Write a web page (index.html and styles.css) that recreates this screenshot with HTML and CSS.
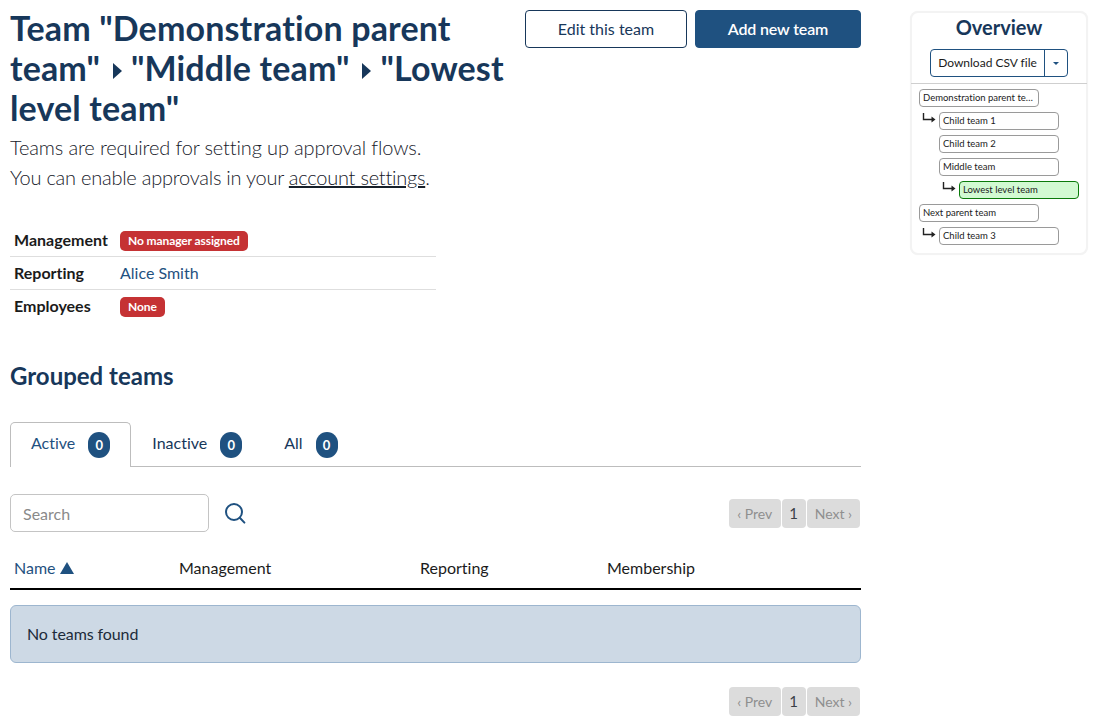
FILE: index.html
```html
<!DOCTYPE html>
<html>

<head>
    <meta charset="utf-8">
    <meta name="viewport" content="width=device-width, initial-scale=1.0">
    <title>Team overview</title>
    <link rel="stylesheet" href="styles.css">
</head>

<body>
    <div class="page">
        <div class="main">
            <div class="head">
                <div class="head-text">
                    <h1>Team "Demonstration parent team" <span class="crumb"></span> "Middle team" <span class="crumb"></span> "Lowest level team"</h1>
                    <p class="lead">Teams are required for setting up approval flows.</p>
                    <p class="lead lead-tight">You can enable approvals in your <a href="#">account settings</a>.</p>
                </div>
                <div class="head-actions">
                    <a class="btn btn-edit" href="#">Edit this team</a>
                    <a class="btn btn-add" href="#">Add new team</a>
                </div>
            </div>

            <div class="info">
                <div class="info-row">
                    <div class="info-label">Management</div>
                    <div><span class="badge-red">No manager assigned</span></div>
                </div>
                <div class="info-row">
                    <div class="info-label">Reporting</div>
                    <div class="info-value"><a class="info-link" href="#">Alice Smith</a></div>
                </div>
                <div class="info-row">
                    <div class="info-label">Employees</div>
                    <div><span class="badge-red">None</span></div>
                </div>
            </div>

            <h2>Grouped teams</h2>

            <div class="tabs">
                <a class="tab tab-active" href="#"><span class="tab-text">Active</span> <span class="count">0</span></a>
                <a class="tab" href="#"><span class="tab-text">Inactive</span> <span class="count">0</span></a>
                <a class="tab" href="#"><span class="tab-text">All</span> <span class="count">0</span></a>
            </div>

            <div class="toolbar">
                <input class="search" type="text" placeholder="Search">
                <svg class="search-icon" width="22" height="22" viewBox="0 0 22 22" fill="none" stroke="#1f5180" stroke-width="2">
                    <circle cx="10" cy="10" r="8"></circle>
                    <path d="M15.8 15.8l4.6 4.8" stroke-linecap="round"></path>
                </svg>
                <div class="pager">
                    <span class="pg pg-off">‹ Prev</span>
                    <span class="pg pg-num">1</span>
                    <span class="pg pg-off">Next ›</span>
                </div>
            </div>

            <div class="thead">
                <div class="th-name">Name <span class="sort"></span></div>
                <div>Management</div>
                <div>Reporting</div>
                <div>Membership</div>
            </div>

            <div class="alert">No teams found</div>

            <div class="pager pager-bottom">
                <span class="pg pg-off">‹ Prev</span>
                <span class="pg pg-num">1</span>
                <span class="pg pg-off">Next ›</span>
            </div>
        </div>

        <div class="side">
            <div class="side-title">Overview</div>
            <div class="split">
                <span class="split-main">Download CSV file</span>
                <span class="split-caret"><i></i></span>
            </div>
            <div class="tree">
                <div class="node">Demonstration parent team</div>
                <div class="node-row lvl1">
                    <svg class="elbow" width="14" height="12" viewBox="0 0 14 12"><path d="M1.5 1v6.5h9" fill="none" stroke="#222" stroke-width="1.4"></path><path d="M9.5 4.5l4 3-4 3z" fill="#222"></path></svg>
                    <div class="node">Child team 1</div>
                </div>
                <div class="node lvl1">Child team 2</div>
                <div class="node lvl1">Middle team</div>
                <div class="node-row lvl2">
                    <svg class="elbow" width="14" height="12" viewBox="0 0 14 12"><path d="M1.5 1v6.5h9" fill="none" stroke="#222" stroke-width="1.4"></path><path d="M9.5 4.5l4 3-4 3z" fill="#222"></path></svg>
                    <div class="node node-current">Lowest level team</div>
                </div>
                <div class="node">Next parent team</div>
                <div class="node-row lvl1">
                    <svg class="elbow" width="14" height="12" viewBox="0 0 14 12"><path d="M1.5 1v6.5h9" fill="none" stroke="#222" stroke-width="1.4"></path><path d="M9.5 4.5l4 3-4 3z" fill="#222"></path></svg>
                    <div class="node">Child team 3</div>
                </div>
            </div>
        </div>
    </div>
</body>

</html>
```
FILE: styles.css
```css
body {
    margin: 0;
    padding: 0;
    font-family: Lato, "Liberation Sans", sans-serif;
    font-size: 16px;
    font-variant-ligatures: none;
    color: #1b1b1b;
    background: #ffffff;
    overflow: hidden;
}

a {
    text-decoration: none;
}

.page {
    display: grid;
    grid-template-columns: 851px 178px;
    column-gap: 49px;
    padding: 10px 0 0 10px;
    align-items: start;
}

/* heading */
.head {
    display: flex;
    justify-content: space-between;
    align-items: flex-start;
}

.head-text {
    width: 505px;
    margin-top: -2px;
}

h1 {
    margin: 0 0 4px;
    font-size: 34px;
    line-height: 40px;
    font-weight: 700;
    letter-spacing: 0.15px;
    color: #17375a;
}

.crumb {
    display: inline-block;
    width: 0;
    height: 0;
    margin: 0 1px 3px 4px;
    border-left: 9px solid #17375a;
    border-top: 8px solid transparent;
    border-bottom: 8px solid transparent;
    vertical-align: middle;
}

.lead {
    margin: 0;
    font-size: 20px;
    line-height: 30px;
    font-weight: 300;
    letter-spacing: -0.14px;
    color: #17202a;
}

.lead-tight {
    letter-spacing: -0.24px;
}

.lead a {
    color: #17202a;
    text-decoration: underline;
}

.head-actions {
    display: flex;
    gap: 8px;
}

.btn {
    box-sizing: border-box;
    display: block;
    height: 38px;
    line-height: 36px;
    text-align: center;
    border-radius: 4px;
    border: 1px solid #17375a;
    font-size: 16px;
}

.btn-edit {
    width: 162px;
    color: #17375a;
    background: #ffffff;
}

.btn-add {
    width: 166px;
    color: #ffffff;
    font-weight: 600;
    letter-spacing: -0.15px;
    background: #1f5180;
    border-color: #1f5180;
}

/* team info */
.info {
    width: 426px;
    margin-top: 32px;
}

.info-row {
    display: flex;
    align-items: center;
    height: 32px;
    padding-left: 4px;
    border-bottom: 1px solid #dedede;
}

.info-row:last-child {
    border-bottom: 0;
}

.info-label {
    width: 106px;
    padding-bottom: 2px;
    font-weight: 700;
}

.info-value {
    padding-bottom: 2px;
}

.info-link {
    color: #1f5180;
}

.badge-red {
    display: inline-block;
    margin-top: 2px;
    padding: 0 8px;
    height: 20px;
    line-height: 20px;
    font-size: 12px;
    font-weight: 700;
    letter-spacing: -0.1px;
    color: #ffffff;
    background: #c53234;
    border-radius: 5px;
    vertical-align: middle;
}

h2 {
    margin: 39px 0 0;
    font-size: 24px;
    line-height: 30px;
    font-weight: 700;
    color: #17375a;
}

/* tabs */
.tabs {
    display: flex;
    height: 44px;
    margin-top: 31px;
    border-bottom: 1px solid #bdbdbd;
}

.tab {
    box-sizing: border-box;
    display: flex;
    align-items: center;
    gap: 13px;
    height: 45px;
    padding: 0 20px;
    color: #17375a;
    border: 1px solid transparent;
    border-bottom: 0;
}

.tab-text {
    padding-bottom: 6px;
}

.tab-active {
    color: #1f5180;
    background: #ffffff;
    border-color: #bdbdbd;
    border-radius: 5px 5px 0 0;
}

.count {
    box-sizing: border-box;
    min-width: 22px;
    height: 26px;
    line-height: 26px;
    text-align: center;
    font-size: 13px;
    font-weight: 700;
    color: #ffffff;
    background: #1f5180;
    border-radius: 12px;
}

/* search and pager */
.toolbar {
    display: flex;
    align-items: center;
    margin-top: 27px;
}

.search {
    box-sizing: border-box;
    width: 199px;
    height: 38px;
    padding: 0 12px;
    font-family: inherit;
    font-size: 16px;
    border: 1px solid #c4c4c4;
    border-radius: 5px;
}

.search::placeholder {
    color: #8a8a8a;
}

.search-icon {
    margin-left: 15px;
}

.pager {
    display: flex;
    gap: 1px;
    margin-left: auto;
    margin-right: 1px;
}

.pg {
    box-sizing: border-box;
    height: 29px;
    line-height: 29px;
    padding: 0 8px;
    font-size: 14px;
    text-align: center;
    background: #dcdcdc;
    border-radius: 4px;
}

.pg-off {
    min-width: 52px;
    color: #8f8f8f;
}

.pg-num {
    width: 24px;
    padding: 0;
    color: #3a3f47;
    font-size: 15px;
}

.pager-bottom {
    justify-content: flex-end;
    margin-top: 24px;
}

/* table head */
.thead {
    display: grid;
    grid-template-columns: 165px 241px 187px 1fr;
    height: 40px;
    margin-top: 16px;
    padding-left: 4px;
    line-height: 39px;
    border-bottom: 2px solid #000000;
    color: #1b1b1b;
}

.th-name {
    color: #1f5180;
}

.sort {
    display: inline-block;
    width: 0;
    height: 0;
    border-left: 7px solid transparent;
    border-right: 7px solid transparent;
    border-bottom: 12px solid #1f5180;
}

.alert {
    box-sizing: border-box;
    height: 58px;
    line-height: 56px;
    margin-top: 15px;
    padding-left: 16px;
    letter-spacing: -0.1px;
    color: #1c2b3a;
    background: #cdd9e5;
    border: 1px solid #9db6cf;
    border-radius: 6px;
}

/* sidebar */
.side {
    box-sizing: border-box;
    height: 244px;
    margin-top: 1px;
    border: 2px solid #f3f3f3;
    border-radius: 8px;
    background: #ffffff;
    box-shadow: 0 0 1px #f3f3f3;
}

.side-title {
    margin-top: 1px;
    text-align: center;
    font-size: 20px;
    line-height: 26px;
    font-weight: 700;
    color: #17375a;
}

.split {
    display: flex;
    width: 138px;
    height: 28px;
    margin: 9px auto 0;
    box-sizing: border-box;
    border: 1px solid #1f5180;
    border-radius: 4px;
    font-size: 12px;
    line-height: 26px;
}

.split-main {
    flex: 1;
    text-align: center;
    border-right: 1px solid #1f5180;
}

.split-caret {
    display: flex;
    align-items: center;
    justify-content: center;
    width: 22px;
}

.split-caret i {
    width: 0;
    height: 0;
    border-left: 3px solid transparent;
    border-right: 3px solid transparent;
    border-top: 3px solid #1f5180;
}

.tree {
    display: flex;
    flex-direction: column;
    gap: 5px;
    margin-top: 6px;
    padding: 5px 0 0 8px;
    border-top: 1px solid #cfcfcf;
    margin-left: -1px;
    margin-right: -1px;
}

.node {
    box-sizing: border-box;
    width: 120px;
    height: 18px;
    padding: 0 3px;
    font-size: 9.5px;
    line-height: 16px;
    color: #1b1b1b;
    background: #ffffff;
    border: 1px solid #9a9a9a;
    border-radius: 4px;
    white-space: nowrap;
    overflow: hidden;
    text-overflow: ellipsis;
}

.lvl1.node {
    margin-left: 20px;
}

.node-row {
    display: flex;
    align-items: flex-start;
}

.node-row.lvl1 {
    margin-left: 3px;
}

.node-row.lvl2 {
    margin-left: 23px;
}

.elbow {
    flex: none;
    width: 14px;
    margin-right: 3px;
}

.node-current {
    background: #d2fad2;
    border-color: #0a7a0a;
}
```
